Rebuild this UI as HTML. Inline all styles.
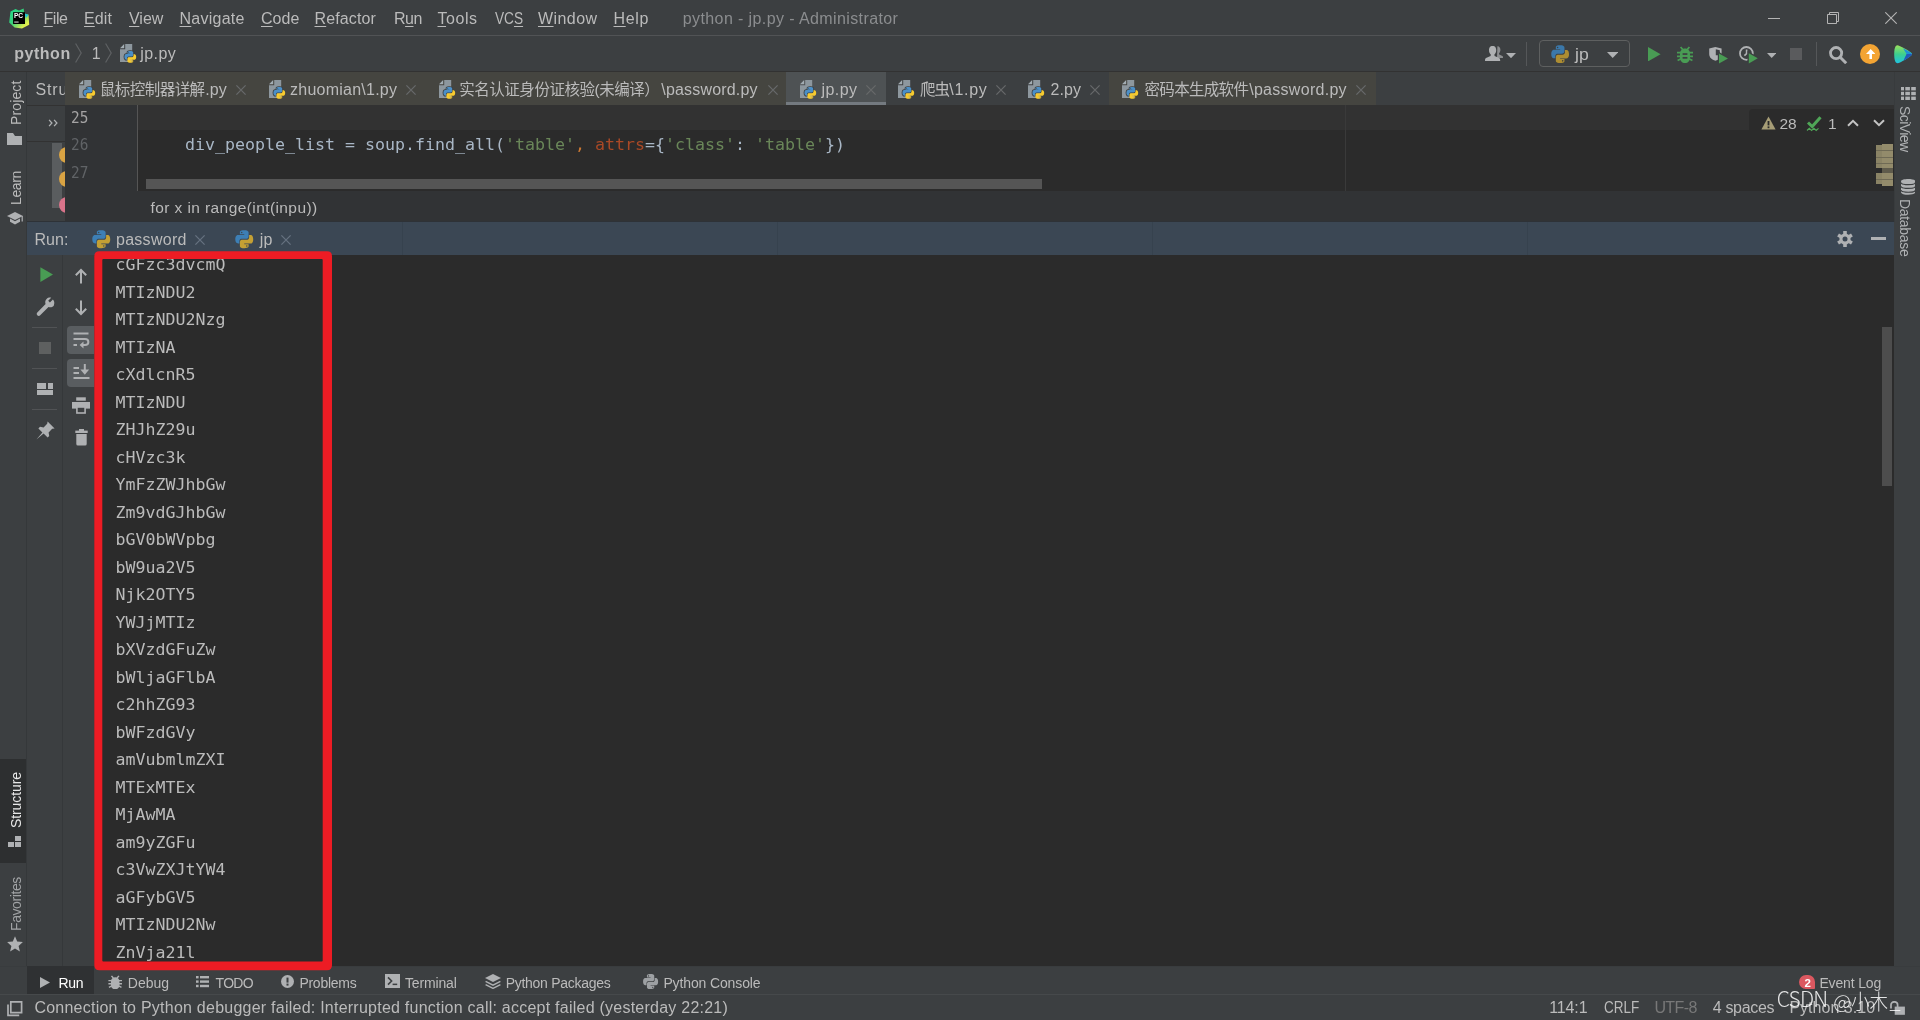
<!DOCTYPE html>
<html lang="zh"><head><meta charset="utf-8"><title>python - jp.py</title><style>
html,body{margin:0;padding:0}
body{width:1920px;height:1020px;background:#3c3f41;overflow:hidden;position:relative;font-family:'Liberation Sans', 'Noto Sans CJK SC', sans-serif;}
#app{position:absolute;left:0;top:0;width:1920px;height:1020px;overflow:hidden;will-change:transform}
.t{position:absolute;white-space:pre;}
.t u{text-decoration:underline;text-decoration-thickness:1px;text-underline-offset:2px}
.code{position:absolute;white-space:pre;font:400 16.61px/27.5px 'DejaVu Sans Mono', 'Liberation Mono', monospace;}
.con{position:absolute;left:115.5px;top:251.1px;white-space:pre;font:400 16.61px/27.5px 'DejaVu Sans Mono', 'Liberation Mono', monospace;color:#bbbbbb}
.wm{position:absolute;white-space:pre;}
</style></head>
<body>
<div id="app">
<div style="position:absolute;left:0px;top:35px;width:1920px;height:1px;background:#515355;"></div>
<div style="position:absolute;left:0px;top:71px;width:1920px;height:1px;background:#323232;"></div>
<div style="position:absolute;left:26px;top:72px;width:1px;height:895px;background:#35383a;"></div>
<div style="position:absolute;left:0px;top:759px;width:26px;height:104px;background:#2d2f30;"></div>
<div style="position:absolute;left:1894px;top:72px;width:1px;height:150px;background:#383b3d;"></div>
<div style="position:absolute;left:27px;top:105px;width:38px;height:1px;background:#323232;"></div>
<div style="position:absolute;left:27px;top:141px;width:38px;height:1px;background:#323232;"></div>
<div style="position:absolute;left:27px;top:142px;width:38px;height:80px;overflow:hidden"><div style="position:absolute;left:25px;top:1px;width:10px;height:65px;background:#5a5d5f;"></div><div style="position:absolute;left:32px;top:5px;width:16px;height:16px;border-radius:8px;background:#d9a343"></div><div style="position:absolute;left:32px;top:29px;width:16px;height:16px;border-radius:8px;background:#d9a343"></div><div style="position:absolute;left:32px;top:55px;width:16px;height:16px;border-radius:8px;background:#d9738a"></div></div>
<svg style="position:absolute;left:48px;top:119px;" width="10" height="8" viewBox="0 0 10 8"><path fill="none" stroke="#afb1b3" stroke-width="1.3" d="M1.1,0.9 L3.9,4 L1.1,7.1 M6.1,0.9 L8.9,4 L6.1,7.1"/></svg>
<div style="position:absolute;left:65px;top:72px;width:721px;height:33px;background:#454540;"></div>
<div style="position:absolute;left:786px;top:72px;width:100px;height:33px;background:#4e5254;"></div>
<div style="position:absolute;left:786px;top:101.5px;width:100px;height:3.5px;background:#747a80;"></div>
<div style="position:absolute;left:1109px;top:72px;width:267px;height:33px;background:#454540;"></div>
<svg style="position:absolute;left:78.6px;top:80px;" width="18" height="20" viewBox="0 0 18 20"><path fill="#8d979e" d="M5.2,0 H12.2 V18 H0 V5.2 H5.2 Z"/><path fill="#a3adb3" d="M0,4.2 L4.2,0 V4.2 Z"/><g transform="translate(3.6,6.2) scale(0.84)"><path fill="#3c3f41" stroke="#3c3f41" stroke-width="2" d="M7.9,1 C4.4,1 4.6,2.5 4.6,2.5 L4.6,4.1 L8,4.1 L8,4.6 L3.3,4.6 C3.3,4.6 1,4.3 1,7.9 C1,11.4 3,11.3 3,11.3 L4.2,11.3 L4.2,9.6 C4.2,9.6 4.1,7.6 6.1,7.6 L9.5,7.6 C9.5,7.6 11.4,7.7 11.4,5.8 L11.4,2.8 C11.4,2.8 11.7,1 7.9,1 Z M6,2.1 C6.4,2.1 6.6,2.4 6.6,2.7 C6.6,3 6.4,3.3 6,3.3 C5.7,3.3 5.4,3 5.4,2.7 C5.4,2.4 5.7,2.1 6,2.1 Z"/><path fill="#4b8fc7" d="M7.9,1 C4.4,1 4.6,2.5 4.6,2.5 L4.6,4.1 L8,4.1 L8,4.6 L3.3,4.6 C3.3,4.6 1,4.3 1,7.9 C1,11.4 3,11.3 3,11.3 L4.2,11.3 L4.2,9.6 C4.2,9.6 4.1,7.6 6.1,7.6 L9.5,7.6 C9.5,7.6 11.4,7.7 11.4,5.8 L11.4,2.8 C11.4,2.8 11.7,1 7.9,1 Z M6,2.1 C6.4,2.1 6.6,2.4 6.6,2.7 C6.6,3 6.4,3.3 6,3.3 C5.7,3.3 5.4,3 5.4,2.7 C5.4,2.4 5.7,2.1 6,2.1 Z"/><path fill="#f7cb2f" d="M8.1,15 C11.6,15 11.4,13.5 11.4,13.5 L11.4,11.9 L8,11.9 L8,11.4 L12.7,11.4 C12.7,11.4 15,11.7 15,8.1 C15,4.6 13,4.7 13,4.7 L11.8,4.7 L11.8,6.4 C11.8,6.4 11.9,8.4 9.9,8.4 L6.5,8.4 C6.5,8.4 4.6,8.3 4.6,10.2 L4.6,13.2 C4.6,13.2 4.3,15 8.1,15 Z M10,13.9 C9.6,13.9 9.4,13.6 9.4,13.3 C9.4,13 9.6,12.7 10,12.7 C10.3,12.7 10.6,13 10.6,13.3 C10.6,13.6 10.3,13.9 10,13.9 Z"/></g></svg>
<svg style="position:absolute;left:268.6px;top:80px;" width="18" height="20" viewBox="0 0 18 20"><path fill="#8d979e" d="M5.2,0 H12.2 V18 H0 V5.2 H5.2 Z"/><path fill="#a3adb3" d="M0,4.2 L4.2,0 V4.2 Z"/><g transform="translate(3.6,6.2) scale(0.84)"><path fill="#3c3f41" stroke="#3c3f41" stroke-width="2" d="M7.9,1 C4.4,1 4.6,2.5 4.6,2.5 L4.6,4.1 L8,4.1 L8,4.6 L3.3,4.6 C3.3,4.6 1,4.3 1,7.9 C1,11.4 3,11.3 3,11.3 L4.2,11.3 L4.2,9.6 C4.2,9.6 4.1,7.6 6.1,7.6 L9.5,7.6 C9.5,7.6 11.4,7.7 11.4,5.8 L11.4,2.8 C11.4,2.8 11.7,1 7.9,1 Z M6,2.1 C6.4,2.1 6.6,2.4 6.6,2.7 C6.6,3 6.4,3.3 6,3.3 C5.7,3.3 5.4,3 5.4,2.7 C5.4,2.4 5.7,2.1 6,2.1 Z"/><path fill="#4b8fc7" d="M7.9,1 C4.4,1 4.6,2.5 4.6,2.5 L4.6,4.1 L8,4.1 L8,4.6 L3.3,4.6 C3.3,4.6 1,4.3 1,7.9 C1,11.4 3,11.3 3,11.3 L4.2,11.3 L4.2,9.6 C4.2,9.6 4.1,7.6 6.1,7.6 L9.5,7.6 C9.5,7.6 11.4,7.7 11.4,5.8 L11.4,2.8 C11.4,2.8 11.7,1 7.9,1 Z M6,2.1 C6.4,2.1 6.6,2.4 6.6,2.7 C6.6,3 6.4,3.3 6,3.3 C5.7,3.3 5.4,3 5.4,2.7 C5.4,2.4 5.7,2.1 6,2.1 Z"/><path fill="#f7cb2f" d="M8.1,15 C11.6,15 11.4,13.5 11.4,13.5 L11.4,11.9 L8,11.9 L8,11.4 L12.7,11.4 C12.7,11.4 15,11.7 15,8.1 C15,4.6 13,4.7 13,4.7 L11.8,4.7 L11.8,6.4 C11.8,6.4 11.9,8.4 9.9,8.4 L6.5,8.4 C6.5,8.4 4.6,8.3 4.6,10.2 L4.6,13.2 C4.6,13.2 4.3,15 8.1,15 Z M10,13.9 C9.6,13.9 9.4,13.6 9.4,13.3 C9.4,13 9.6,12.7 10,12.7 C10.3,12.7 10.6,13 10.6,13.3 C10.6,13.6 10.3,13.9 10,13.9 Z"/></g></svg>
<svg style="position:absolute;left:438.6px;top:80px;" width="18" height="20" viewBox="0 0 18 20"><path fill="#8d979e" d="M5.2,0 H12.2 V18 H0 V5.2 H5.2 Z"/><path fill="#a3adb3" d="M0,4.2 L4.2,0 V4.2 Z"/><g transform="translate(3.6,6.2) scale(0.84)"><path fill="#3c3f41" stroke="#3c3f41" stroke-width="2" d="M7.9,1 C4.4,1 4.6,2.5 4.6,2.5 L4.6,4.1 L8,4.1 L8,4.6 L3.3,4.6 C3.3,4.6 1,4.3 1,7.9 C1,11.4 3,11.3 3,11.3 L4.2,11.3 L4.2,9.6 C4.2,9.6 4.1,7.6 6.1,7.6 L9.5,7.6 C9.5,7.6 11.4,7.7 11.4,5.8 L11.4,2.8 C11.4,2.8 11.7,1 7.9,1 Z M6,2.1 C6.4,2.1 6.6,2.4 6.6,2.7 C6.6,3 6.4,3.3 6,3.3 C5.7,3.3 5.4,3 5.4,2.7 C5.4,2.4 5.7,2.1 6,2.1 Z"/><path fill="#4b8fc7" d="M7.9,1 C4.4,1 4.6,2.5 4.6,2.5 L4.6,4.1 L8,4.1 L8,4.6 L3.3,4.6 C3.3,4.6 1,4.3 1,7.9 C1,11.4 3,11.3 3,11.3 L4.2,11.3 L4.2,9.6 C4.2,9.6 4.1,7.6 6.1,7.6 L9.5,7.6 C9.5,7.6 11.4,7.7 11.4,5.8 L11.4,2.8 C11.4,2.8 11.7,1 7.9,1 Z M6,2.1 C6.4,2.1 6.6,2.4 6.6,2.7 C6.6,3 6.4,3.3 6,3.3 C5.7,3.3 5.4,3 5.4,2.7 C5.4,2.4 5.7,2.1 6,2.1 Z"/><path fill="#f7cb2f" d="M8.1,15 C11.6,15 11.4,13.5 11.4,13.5 L11.4,11.9 L8,11.9 L8,11.4 L12.7,11.4 C12.7,11.4 15,11.7 15,8.1 C15,4.6 13,4.7 13,4.7 L11.8,4.7 L11.8,6.4 C11.8,6.4 11.9,8.4 9.9,8.4 L6.5,8.4 C6.5,8.4 4.6,8.3 4.6,10.2 L4.6,13.2 C4.6,13.2 4.3,15 8.1,15 Z M10,13.9 C9.6,13.9 9.4,13.6 9.4,13.3 C9.4,13 9.6,12.7 10,12.7 C10.3,12.7 10.6,13 10.6,13.3 C10.6,13.6 10.3,13.9 10,13.9 Z"/></g></svg>
<svg style="position:absolute;left:800px;top:80px;" width="18" height="20" viewBox="0 0 18 20"><path fill="#8d979e" d="M5.2,0 H12.2 V18 H0 V5.2 H5.2 Z"/><path fill="#a3adb3" d="M0,4.2 L4.2,0 V4.2 Z"/><g transform="translate(3.6,6.2) scale(0.84)"><path fill="#3c3f41" stroke="#3c3f41" stroke-width="2" d="M7.9,1 C4.4,1 4.6,2.5 4.6,2.5 L4.6,4.1 L8,4.1 L8,4.6 L3.3,4.6 C3.3,4.6 1,4.3 1,7.9 C1,11.4 3,11.3 3,11.3 L4.2,11.3 L4.2,9.6 C4.2,9.6 4.1,7.6 6.1,7.6 L9.5,7.6 C9.5,7.6 11.4,7.7 11.4,5.8 L11.4,2.8 C11.4,2.8 11.7,1 7.9,1 Z M6,2.1 C6.4,2.1 6.6,2.4 6.6,2.7 C6.6,3 6.4,3.3 6,3.3 C5.7,3.3 5.4,3 5.4,2.7 C5.4,2.4 5.7,2.1 6,2.1 Z"/><path fill="#4b8fc7" d="M7.9,1 C4.4,1 4.6,2.5 4.6,2.5 L4.6,4.1 L8,4.1 L8,4.6 L3.3,4.6 C3.3,4.6 1,4.3 1,7.9 C1,11.4 3,11.3 3,11.3 L4.2,11.3 L4.2,9.6 C4.2,9.6 4.1,7.6 6.1,7.6 L9.5,7.6 C9.5,7.6 11.4,7.7 11.4,5.8 L11.4,2.8 C11.4,2.8 11.7,1 7.9,1 Z M6,2.1 C6.4,2.1 6.6,2.4 6.6,2.7 C6.6,3 6.4,3.3 6,3.3 C5.7,3.3 5.4,3 5.4,2.7 C5.4,2.4 5.7,2.1 6,2.1 Z"/><path fill="#f7cb2f" d="M8.1,15 C11.6,15 11.4,13.5 11.4,13.5 L11.4,11.9 L8,11.9 L8,11.4 L12.7,11.4 C12.7,11.4 15,11.7 15,8.1 C15,4.6 13,4.7 13,4.7 L11.8,4.7 L11.8,6.4 C11.8,6.4 11.9,8.4 9.9,8.4 L6.5,8.4 C6.5,8.4 4.6,8.3 4.6,10.2 L4.6,13.2 C4.6,13.2 4.3,15 8.1,15 Z M10,13.9 C9.6,13.9 9.4,13.6 9.4,13.3 C9.4,13 9.6,12.7 10,12.7 C10.3,12.7 10.6,13 10.6,13.3 C10.6,13.6 10.3,13.9 10,13.9 Z"/></g></svg>
<svg style="position:absolute;left:898.3px;top:80px;" width="18" height="20" viewBox="0 0 18 20"><path fill="#8d979e" d="M5.2,0 H12.2 V18 H0 V5.2 H5.2 Z"/><path fill="#a3adb3" d="M0,4.2 L4.2,0 V4.2 Z"/><g transform="translate(3.6,6.2) scale(0.84)"><path fill="#3c3f41" stroke="#3c3f41" stroke-width="2" d="M7.9,1 C4.4,1 4.6,2.5 4.6,2.5 L4.6,4.1 L8,4.1 L8,4.6 L3.3,4.6 C3.3,4.6 1,4.3 1,7.9 C1,11.4 3,11.3 3,11.3 L4.2,11.3 L4.2,9.6 C4.2,9.6 4.1,7.6 6.1,7.6 L9.5,7.6 C9.5,7.6 11.4,7.7 11.4,5.8 L11.4,2.8 C11.4,2.8 11.7,1 7.9,1 Z M6,2.1 C6.4,2.1 6.6,2.4 6.6,2.7 C6.6,3 6.4,3.3 6,3.3 C5.7,3.3 5.4,3 5.4,2.7 C5.4,2.4 5.7,2.1 6,2.1 Z"/><path fill="#4b8fc7" d="M7.9,1 C4.4,1 4.6,2.5 4.6,2.5 L4.6,4.1 L8,4.1 L8,4.6 L3.3,4.6 C3.3,4.6 1,4.3 1,7.9 C1,11.4 3,11.3 3,11.3 L4.2,11.3 L4.2,9.6 C4.2,9.6 4.1,7.6 6.1,7.6 L9.5,7.6 C9.5,7.6 11.4,7.7 11.4,5.8 L11.4,2.8 C11.4,2.8 11.7,1 7.9,1 Z M6,2.1 C6.4,2.1 6.6,2.4 6.6,2.7 C6.6,3 6.4,3.3 6,3.3 C5.7,3.3 5.4,3 5.4,2.7 C5.4,2.4 5.7,2.1 6,2.1 Z"/><path fill="#f7cb2f" d="M8.1,15 C11.6,15 11.4,13.5 11.4,13.5 L11.4,11.9 L8,11.9 L8,11.4 L12.7,11.4 C12.7,11.4 15,11.7 15,8.1 C15,4.6 13,4.7 13,4.7 L11.8,4.7 L11.8,6.4 C11.8,6.4 11.9,8.4 9.9,8.4 L6.5,8.4 C6.5,8.4 4.6,8.3 4.6,10.2 L4.6,13.2 C4.6,13.2 4.3,15 8.1,15 Z M10,13.9 C9.6,13.9 9.4,13.6 9.4,13.3 C9.4,13 9.6,12.7 10,12.7 C10.3,12.7 10.6,13 10.6,13.3 C10.6,13.6 10.3,13.9 10,13.9 Z"/></g></svg>
<svg style="position:absolute;left:1028.3px;top:80px;" width="18" height="20" viewBox="0 0 18 20"><path fill="#8d979e" d="M5.2,0 H12.2 V18 H0 V5.2 H5.2 Z"/><path fill="#a3adb3" d="M0,4.2 L4.2,0 V4.2 Z"/><g transform="translate(3.6,6.2) scale(0.84)"><path fill="#3c3f41" stroke="#3c3f41" stroke-width="2" d="M7.9,1 C4.4,1 4.6,2.5 4.6,2.5 L4.6,4.1 L8,4.1 L8,4.6 L3.3,4.6 C3.3,4.6 1,4.3 1,7.9 C1,11.4 3,11.3 3,11.3 L4.2,11.3 L4.2,9.6 C4.2,9.6 4.1,7.6 6.1,7.6 L9.5,7.6 C9.5,7.6 11.4,7.7 11.4,5.8 L11.4,2.8 C11.4,2.8 11.7,1 7.9,1 Z M6,2.1 C6.4,2.1 6.6,2.4 6.6,2.7 C6.6,3 6.4,3.3 6,3.3 C5.7,3.3 5.4,3 5.4,2.7 C5.4,2.4 5.7,2.1 6,2.1 Z"/><path fill="#4b8fc7" d="M7.9,1 C4.4,1 4.6,2.5 4.6,2.5 L4.6,4.1 L8,4.1 L8,4.6 L3.3,4.6 C3.3,4.6 1,4.3 1,7.9 C1,11.4 3,11.3 3,11.3 L4.2,11.3 L4.2,9.6 C4.2,9.6 4.1,7.6 6.1,7.6 L9.5,7.6 C9.5,7.6 11.4,7.7 11.4,5.8 L11.4,2.8 C11.4,2.8 11.7,1 7.9,1 Z M6,2.1 C6.4,2.1 6.6,2.4 6.6,2.7 C6.6,3 6.4,3.3 6,3.3 C5.7,3.3 5.4,3 5.4,2.7 C5.4,2.4 5.7,2.1 6,2.1 Z"/><path fill="#f7cb2f" d="M8.1,15 C11.6,15 11.4,13.5 11.4,13.5 L11.4,11.9 L8,11.9 L8,11.4 L12.7,11.4 C12.7,11.4 15,11.7 15,8.1 C15,4.6 13,4.7 13,4.7 L11.8,4.7 L11.8,6.4 C11.8,6.4 11.9,8.4 9.9,8.4 L6.5,8.4 C6.5,8.4 4.6,8.3 4.6,10.2 L4.6,13.2 C4.6,13.2 4.3,15 8.1,15 Z M10,13.9 C9.6,13.9 9.4,13.6 9.4,13.3 C9.4,13 9.6,12.7 10,12.7 C10.3,12.7 10.6,13 10.6,13.3 C10.6,13.6 10.3,13.9 10,13.9 Z"/></g></svg>
<svg style="position:absolute;left:1122.3px;top:80px;" width="18" height="20" viewBox="0 0 18 20"><path fill="#8d979e" d="M5.2,0 H12.2 V18 H0 V5.2 H5.2 Z"/><path fill="#a3adb3" d="M0,4.2 L4.2,0 V4.2 Z"/><g transform="translate(3.6,6.2) scale(0.84)"><path fill="#3c3f41" stroke="#3c3f41" stroke-width="2" d="M7.9,1 C4.4,1 4.6,2.5 4.6,2.5 L4.6,4.1 L8,4.1 L8,4.6 L3.3,4.6 C3.3,4.6 1,4.3 1,7.9 C1,11.4 3,11.3 3,11.3 L4.2,11.3 L4.2,9.6 C4.2,9.6 4.1,7.6 6.1,7.6 L9.5,7.6 C9.5,7.6 11.4,7.7 11.4,5.8 L11.4,2.8 C11.4,2.8 11.7,1 7.9,1 Z M6,2.1 C6.4,2.1 6.6,2.4 6.6,2.7 C6.6,3 6.4,3.3 6,3.3 C5.7,3.3 5.4,3 5.4,2.7 C5.4,2.4 5.7,2.1 6,2.1 Z"/><path fill="#4b8fc7" d="M7.9,1 C4.4,1 4.6,2.5 4.6,2.5 L4.6,4.1 L8,4.1 L8,4.6 L3.3,4.6 C3.3,4.6 1,4.3 1,7.9 C1,11.4 3,11.3 3,11.3 L4.2,11.3 L4.2,9.6 C4.2,9.6 4.1,7.6 6.1,7.6 L9.5,7.6 C9.5,7.6 11.4,7.7 11.4,5.8 L11.4,2.8 C11.4,2.8 11.7,1 7.9,1 Z M6,2.1 C6.4,2.1 6.6,2.4 6.6,2.7 C6.6,3 6.4,3.3 6,3.3 C5.7,3.3 5.4,3 5.4,2.7 C5.4,2.4 5.7,2.1 6,2.1 Z"/><path fill="#f7cb2f" d="M8.1,15 C11.6,15 11.4,13.5 11.4,13.5 L11.4,11.9 L8,11.9 L8,11.4 L12.7,11.4 C12.7,11.4 15,11.7 15,8.1 C15,4.6 13,4.7 13,4.7 L11.8,4.7 L11.8,6.4 C11.8,6.4 11.9,8.4 9.9,8.4 L6.5,8.4 C6.5,8.4 4.6,8.3 4.6,10.2 L4.6,13.2 C4.6,13.2 4.3,15 8.1,15 Z M10,13.9 C9.6,13.9 9.4,13.6 9.4,13.3 C9.4,13 9.6,12.7 10,12.7 C10.3,12.7 10.6,13 10.6,13.3 C10.6,13.6 10.3,13.9 10,13.9 Z"/></g></svg>
<svg style="position:absolute;left:234px;top:82.5px;" width="14" height="14" viewBox="-7 -7 14 14"><path d="M-4.6,-4.6 L4.6,4.6 M4.6,-4.6 L-4.6,4.6" stroke="#67696a" stroke-width="1.25" fill="none"/></svg>
<svg style="position:absolute;left:404px;top:82.5px;" width="14" height="14" viewBox="-7 -7 14 14"><path d="M-4.6,-4.6 L4.6,4.6 M4.6,-4.6 L-4.6,4.6" stroke="#67696a" stroke-width="1.25" fill="none"/></svg>
<svg style="position:absolute;left:766px;top:82.5px;" width="14" height="14" viewBox="-7 -7 14 14"><path d="M-4.6,-4.6 L4.6,4.6 M4.6,-4.6 L-4.6,4.6" stroke="#67696a" stroke-width="1.25" fill="none"/></svg>
<svg style="position:absolute;left:864px;top:82.5px;" width="14" height="14" viewBox="-7 -7 14 14"><path d="M-4.6,-4.6 L4.6,4.6 M4.6,-4.6 L-4.6,4.6" stroke="#67696a" stroke-width="1.25" fill="none"/></svg>
<svg style="position:absolute;left:994px;top:82.5px;" width="14" height="14" viewBox="-7 -7 14 14"><path d="M-4.6,-4.6 L4.6,4.6 M4.6,-4.6 L-4.6,4.6" stroke="#67696a" stroke-width="1.25" fill="none"/></svg>
<svg style="position:absolute;left:1088.3px;top:82.5px;" width="14" height="14" viewBox="-7 -7 14 14"><path d="M-4.6,-4.6 L4.6,4.6 M4.6,-4.6 L-4.6,4.6" stroke="#67696a" stroke-width="1.25" fill="none"/></svg>
<svg style="position:absolute;left:1354px;top:82.5px;" width="14" height="14" viewBox="-7 -7 14 14"><path d="M-4.6,-4.6 L4.6,4.6 M4.6,-4.6 L-4.6,4.6" stroke="#67696a" stroke-width="1.25" fill="none"/></svg>
<div style="position:absolute;left:65px;top:105px;width:1829px;height:86px;background:#2b2b2b;"></div>
<div style="position:absolute;left:65px;top:105px;width:72px;height:86px;background:#313335;"></div>
<div style="position:absolute;left:138px;top:105px;width:1756px;height:25px;background:#323232;"></div>
<div style="position:absolute;left:1749px;top:109px;width:145px;height:21px;background:#2b2b2b;border-radius:4px 0 0 0"></div>
<div style="position:absolute;left:137px;top:105px;width:1px;height:86px;background:#555555;"></div>
<div style="position:absolute;left:1345px;top:105px;width:1px;height:86px;background:#3a3a3a;"></div>
<div style="position:absolute;left:146px;top:179px;width:896px;height:10px;background:#555555;"></div>
<div style="font:400 16px/1 'DejaVu Sans Mono', 'Liberation Mono', monospace;position:absolute;left:71.3px;white-space:pre;transform-origin:0 0;transform:scaleX(0.9);top:110.0px;color:#a4a3a3">25</div>
<div style="font:400 16px/1 'DejaVu Sans Mono', 'Liberation Mono', monospace;position:absolute;left:71.3px;white-space:pre;transform-origin:0 0;transform:scaleX(0.9);top:137.4px;color:#606366">26</div>
<div style="font:400 16px/1 'DejaVu Sans Mono', 'Liberation Mono', monospace;position:absolute;left:71.3px;white-space:pre;transform-origin:0 0;transform:scaleX(0.9);top:165.1px;color:#606366">27</div>
<div class="code" style="left:185px;top:130.8px;color:#a9b7c6">div_people_list = soup.find_all(<span style="color:#6a8759">'table'</span><span style="color:#cc7832">,</span> <span style="color:#aa4926">attrs</span>={<span style="color:#6a8759">'class'</span>: <span style="color:#6a8759">'table'</span>})</div>
<svg style="position:absolute;left:1761px;top:116px;" width="15" height="14" viewBox="0 0 15 14"><path fill="#a69d76" d="M7.5,0.5 L14.6,13.5 H0.4 Z"/><rect x="6.6" y="5" width="1.8" height="4.4" fill="#2b2b2b"/><rect x="6.6" y="10.4" width="1.8" height="1.8" fill="#2b2b2b"/></svg>
<svg style="position:absolute;left:1806px;top:115px;" width="17" height="18" viewBox="0 0 17 18"><path fill="none" stroke="#4fa657" stroke-width="3" d="M2,7.5 L6.2,11.5 L14.5,2.2"/><path fill="none" stroke="#4fa657" stroke-width="1.1" d="M1,15.5 L3.3,13.3 L5.6,15.5 L7.9,13.3 L10.2,15.5 L12.5,13.3"/></svg>
<svg style="position:absolute;left:1847px;top:119px;" width="12" height="8" viewBox="0 0 12 8"><path fill="none" stroke="#c4c4c4" stroke-width="2" d="M1,6.8 L6,1.8 L11,6.8"/></svg>
<svg style="position:absolute;left:1873px;top:119px;" width="12" height="8" viewBox="0 0 12 8"><path fill="none" stroke="#c4c4c4" stroke-width="2" d="M1,1.2 L6,6.2 L11,1.2"/></svg>
<div style="position:absolute;left:1876px;top:145px;width:6px;height:23px;background:#8a8365;"></div>
<div style="position:absolute;left:1882px;top:144px;width:11px;height:24px;background:#938b6b;"></div>
<div style="position:absolute;left:1882px;top:168px;width:11px;height:5px;background:#5f5b4c;"></div>
<div style="position:absolute;left:1876px;top:173px;width:6px;height:11px;background:#8a8365;"></div>
<div style="position:absolute;left:1882px;top:173px;width:11px;height:13px;background:#938b6b;"></div>
<div style="position:absolute;left:1876px;top:150px;width:17px;height:1px;background:#6f6a55;"></div>
<div style="position:absolute;left:1876px;top:157px;width:17px;height:1px;background:#6f6a55;"></div>
<div style="position:absolute;left:1876px;top:163px;width:17px;height:1px;background:#6f6a55;"></div>
<div style="position:absolute;left:1876px;top:179px;width:17px;height:1px;background:#6f6a55;"></div>
<div style="position:absolute;left:65px;top:191px;width:1829px;height:31px;background:#313335;"></div>
<div style="position:absolute;left:27px;top:221px;width:1867px;height:1px;background:#2e3237;"></div>
<div style="position:absolute;left:27px;top:222px;width:1867px;height:33px;background:#3b4754;"></div>
<div style="position:absolute;left:402px;top:222px;width:1px;height:33px;background:#36424e;"></div>
<div style="position:absolute;left:777px;top:222px;width:1px;height:33px;background:#36424e;"></div>
<div style="position:absolute;left:1152px;top:222px;width:1px;height:33px;background:#36424e;"></div>
<div style="position:absolute;left:1527px;top:222px;width:1px;height:33px;background:#36424e;"></div>
<svg style="position:absolute;left:90.7px;top:228.6px;" width="20.5" height="20.5" viewBox="0 0 16 16"><path fill="#3d7fb5" d="M7.9,1 C4.4,1 4.6,2.5 4.6,2.5 L4.6,4.1 L8,4.1 L8,4.6 L3.3,4.6 C3.3,4.6 1,4.3 1,7.9 C1,11.4 3,11.3 3,11.3 L4.2,11.3 L4.2,9.6 C4.2,9.6 4.1,7.6 6.1,7.6 L9.5,7.6 C9.5,7.6 11.4,7.7 11.4,5.8 L11.4,2.8 C11.4,2.8 11.7,1 7.9,1 Z M6,2.1 C6.4,2.1 6.6,2.4 6.6,2.7 C6.6,3 6.4,3.3 6,3.3 C5.7,3.3 5.4,3 5.4,2.7 C5.4,2.4 5.7,2.1 6,2.1 Z"/><path fill="#c4a034" d="M8.1,15 C11.6,15 11.4,13.5 11.4,13.5 L11.4,11.9 L8,11.9 L8,11.4 L12.7,11.4 C12.7,11.4 15,11.7 15,8.1 C15,4.6 13,4.7 13,4.7 L11.8,4.7 L11.8,6.4 C11.8,6.4 11.9,8.4 9.9,8.4 L6.5,8.4 C6.5,8.4 4.6,8.3 4.6,10.2 L4.6,13.2 C4.6,13.2 4.3,15 8.1,15 Z M10,13.9 C9.6,13.9 9.4,13.6 9.4,13.3 C9.4,13 9.6,12.7 10,12.7 C10.3,12.7 10.6,13 10.6,13.3 C10.6,13.6 10.3,13.9 10,13.9 Z"/></svg>
<svg style="position:absolute;left:234.2px;top:228.6px;" width="20.5" height="20.5" viewBox="0 0 16 16"><path fill="#3d7fb5" d="M7.9,1 C4.4,1 4.6,2.5 4.6,2.5 L4.6,4.1 L8,4.1 L8,4.6 L3.3,4.6 C3.3,4.6 1,4.3 1,7.9 C1,11.4 3,11.3 3,11.3 L4.2,11.3 L4.2,9.6 C4.2,9.6 4.1,7.6 6.1,7.6 L9.5,7.6 C9.5,7.6 11.4,7.7 11.4,5.8 L11.4,2.8 C11.4,2.8 11.7,1 7.9,1 Z M6,2.1 C6.4,2.1 6.6,2.4 6.6,2.7 C6.6,3 6.4,3.3 6,3.3 C5.7,3.3 5.4,3 5.4,2.7 C5.4,2.4 5.7,2.1 6,2.1 Z"/><path fill="#c4a034" d="M8.1,15 C11.6,15 11.4,13.5 11.4,13.5 L11.4,11.9 L8,11.9 L8,11.4 L12.7,11.4 C12.7,11.4 15,11.7 15,8.1 C15,4.6 13,4.7 13,4.7 L11.8,4.7 L11.8,6.4 C11.8,6.4 11.9,8.4 9.9,8.4 L6.5,8.4 C6.5,8.4 4.6,8.3 4.6,10.2 L4.6,13.2 C4.6,13.2 4.3,15 8.1,15 Z M10,13.9 C9.6,13.9 9.4,13.6 9.4,13.3 C9.4,13 9.6,12.7 10,12.7 C10.3,12.7 10.6,13 10.6,13.3 C10.6,13.6 10.3,13.9 10,13.9 Z"/></svg>
<svg style="position:absolute;left:193px;top:232.5px;" width="14" height="14" viewBox="-7 -7 14 14"><path d="M-4.6,-4.6 L4.6,4.6 M4.6,-4.6 L-4.6,4.6" stroke="#667280" stroke-width="1.25" fill="none"/></svg>
<svg style="position:absolute;left:279px;top:232.5px;" width="14" height="14" viewBox="-7 -7 14 14"><path d="M-4.6,-4.6 L4.6,4.6 M4.6,-4.6 L-4.6,4.6" stroke="#667280" stroke-width="1.25" fill="none"/></svg>
<svg style="position:absolute;left:1837px;top:231px;" width="16" height="16" viewBox="0 0 16 16"><g transform="translate(8,8)" fill="#afb1b3"><circle r="5.6"/><rect x="-1.8" y="-8" width="3.6" height="4" transform="rotate(0)"/><rect x="-1.8" y="-8" width="3.6" height="4" transform="rotate(60)"/><rect x="-1.8" y="-8" width="3.6" height="4" transform="rotate(120)"/><rect x="-1.8" y="-8" width="3.6" height="4" transform="rotate(180)"/><rect x="-1.8" y="-8" width="3.6" height="4" transform="rotate(240)"/><rect x="-1.8" y="-8" width="3.6" height="4" transform="rotate(300)"/><circle r="2.5" fill="#3b4754"/></g></svg>
<div style="position:absolute;left:1870.5px;top:237px;width:15.5px;height:3.4px;background:#afb1b3;"></div>
<div style="position:absolute;left:95px;top:255px;width:1799px;height:711px;background:#2b2b2b;"></div>
<div style="position:absolute;left:62px;top:255px;width:1px;height:711px;background:#35383a;"></div>
<div style="position:absolute;left:94px;top:255px;width:1px;height:711px;background:#35383a;"></div>
<div style="position:absolute;left:1882px;top:327px;width:10.3px;height:159px;background:#4d4d4d;"></div>
<div class="con">cGFzc3dvcmQ
MTIzNDU2
MTIzNDU2Nzg
MTIzNA
cXdlcnR5
MTIzNDU
ZHJhZ29u
cHVzc3k
YmFzZWJhbGw
Zm9vdGJhbGw
bGV0bWVpbg
bW9ua2V5
Njk2OTY5
YWJjMTIz
bXVzdGFuZw
bWljaGFlbA
c2hhZG93
bWFzdGVy
amVubmlmZXI
MTExMTEx
MjAwMA
am9yZGFu
c3VwZXJtYW4
aGFybGV5
MTIzNDU2Nw
ZnVja21l</div>
<svg style="position:absolute;left:39.5px;top:266.5px;" width="14" height="16" viewBox="0 0 14 16"><path fill="#499c54" d="M0.4,0.3 L13,7.6 L0.4,15 Z"/></svg>
<svg style="position:absolute;left:36px;top:296.5px;" width="19" height="19" viewBox="0 0 19 19"><path fill="#afb1b3" d="M17.6,5.2 C17.9,3.5 17.4,1.9 16.3,0.9 L13.3,3.9 L11.6,2.2 L14.6,-0.8 C13,-1.3 11.2,-0.8 10,0.4 C8.6,1.8 8.3,3.8 9,5.5 L0.7,13.8 C-0.1,14.6 -0.1,15.9 0.7,16.7 C1.5,17.5 2.8,17.5 3.6,16.7 L11.9,8.4 C13.6,9.1 15.6,8.8 17,7.4 C17.3,6.7 17.5,6 17.6,5.2 Z" transform="translate(0.6,1.6)"/></svg>
<div style="position:absolute;left:32px;top:326.5px;width:25px;height:1px;background:#515355;"></div>
<div style="position:absolute;left:39px;top:342px;width:12px;height:12px;background:#5e6060;"></div>
<div style="position:absolute;left:32px;top:368px;width:25px;height:1px;background:#515355;"></div>
<div style="position:absolute;left:37.2px;top:383px;width:9px;height:5.5px;background:#afb1b3;"></div>
<div style="position:absolute;left:47.6px;top:383px;width:5.3px;height:5.5px;background:#afb1b3;"></div>
<div style="position:absolute;left:37.2px;top:390px;width:15.7px;height:5.3px;background:#afb1b3;"></div>
<div style="position:absolute;left:32px;top:409px;width:25px;height:1px;background:#515355;"></div>
<svg style="position:absolute;left:35.5px;top:420.5px;" width="19" height="19" viewBox="0 0 19 19"><path fill="#afb1b3" d="M11.6,0.4 L18.6,7.4 L16.2,7.8 L12.6,11.4 L13.2,15 L11.6,16.6 L7.6,12.6 L0.4,18.6 L6.4,11.4 L2.4,7.4 L4,5.8 L7.6,6.4 L11.2,2.8 Z"/></svg>
<svg style="position:absolute;left:75px;top:267.5px;" width="12" height="16" viewBox="0 0 12 16"><path fill="none" stroke="#afb1b3" stroke-width="2" d="M6,15.5 V2 M0.8,7.2 L6,2 L11.2,7.2"/></svg>
<svg style="position:absolute;left:75px;top:300px;" width="12" height="16" viewBox="0 0 12 16"><path fill="none" stroke="#afb1b3" stroke-width="2" d="M6,0.5 V14 M0.8,8.8 L6,14 L11.2,8.8"/></svg>
<div style="position:absolute;left:67px;top:326px;width:27px;height:28px;background:#595d60;border-radius:4px 0 0 4px"></div>
<svg style="position:absolute;left:73px;top:332px;" width="17" height="17" viewBox="0 0 17 17"><g fill="none" stroke="#afb1b3" stroke-width="2"><path d="M0.5,1.5 H15.5"/><path d="M0.5,7 H12 C16.5,7 16.5,13 12,13 H8"/><path d="M0.5,13 H4"/></g><path fill="#afb1b3" d="M10.5,9.6 V16.4 L6.6,13 Z"/></svg>
<div style="position:absolute;left:67px;top:359px;width:27px;height:27.5px;background:#595d60;border-radius:4px 0 0 4px"></div>
<svg style="position:absolute;left:73px;top:364px;" width="17" height="16" viewBox="0 0 17 16"><g fill="none" stroke="#afb1b3" stroke-width="2"><path d="M0.5,4 H6"/><path d="M0.5,9 H6"/><path d="M0.5,14 H16.5"/><path d="M11.8,0 V9"/></g><path fill="#afb1b3" d="M7.4,5.6 H16.2 L11.8,10.8 Z"/></svg>
<svg style="position:absolute;left:72px;top:397px;" width="18" height="17" viewBox="0 0 18 17"><rect x="4.2" y="0.3" width="9.6" height="3.4" fill="#afb1b3"/><rect x="0" y="5" width="18" height="6.6" fill="#afb1b3"/><rect x="4.9" y="10" width="8.2" height="6" fill="#3c3f41" stroke="#afb1b3" stroke-width="1.6"/></svg>
<svg style="position:absolute;left:74.5px;top:429px;" width="13" height="17" viewBox="0 0 13 17"><rect x="0.3" y="1.6" width="12.4" height="2.4" fill="#afb1b3"/><rect x="4" y="0" width="5" height="2" fill="#afb1b3"/><path fill="#afb1b3" d="M1.3,5 H11.7 V15 Q11.7,16.6 10.2,16.6 H2.8 Q1.3,16.6 1.3,15 Z"/></svg>
<svg style="position:absolute;left:7px;top:132.5px;" width="15" height="12" viewBox="0 0 15 12"><path fill="#afb1b3" d="M0,0 H6 L8,3 H15 V12 H0 Z"/></svg>
<svg style="position:absolute;left:6.5px;top:211.5px;" width="16" height="13" viewBox="0 0 16 13"><path fill="#afb1b3" d="M8,0 L16,4 L8,8 L0,4 Z"/><path fill="#afb1b3" d="M3,6.6 L8,9.2 L13,6.6 V9.8 L8,12.6 L3,9.8 Z"/><rect x="14.6" y="4" width="1.2" height="5.5" fill="#afb1b3"/></svg>
<div style="position:absolute;left:14.6px;top:836px;width:6px;height:5px;background:#afb1b3;"></div>
<div style="position:absolute;left:8px;top:842.3px;width:6px;height:5px;background:#afb1b3;"></div>
<div style="position:absolute;left:14.6px;top:842.3px;width:6px;height:5px;background:#afb1b3;"></div>
<svg style="position:absolute;left:6.5px;top:936px;" width="16" height="16" viewBox="0 0 16 16"><path fill="#afb1b3" d="M8,0.3 L10.2,5.6 L15.9,6.1 L11.6,9.9 L12.9,15.5 L8,12.5 L3.1,15.5 L4.4,9.9 L0.1,6.1 L5.8,5.6 Z"/></svg>
<svg style="position:absolute;left:1900.5px;top:87px;" width="15" height="13" viewBox="0 0 15 13"><rect x="0" y="0" width="3" height="3.4" fill="#afb1b3"/><rect x="4.3" y="0" width="4.6" height="3.4" fill="#afb1b3"/><rect x="10.2" y="0" width="4.6" height="3.4" fill="#afb1b3"/><rect x="0" y="4.8" width="3" height="3.4" fill="#afb1b3"/><rect x="4.3" y="4.8" width="4.6" height="3.4" fill="#afb1b3"/><rect x="10.2" y="4.8" width="4.6" height="3.4" fill="#afb1b3"/><rect x="0" y="9.6" width="3" height="3.4" fill="#afb1b3"/><rect x="4.3" y="9.6" width="4.6" height="3.4" fill="#afb1b3"/><rect x="10.2" y="9.6" width="4.6" height="3.4" fill="#afb1b3"/></svg>
<svg style="position:absolute;left:1900.9px;top:178.8px;" width="14.4" height="15.8" viewBox="0 0 14.4 15.8"><path fill="#afb1b3" d="M0,2.4 C0,-0.8 14.4,-0.8 14.4,2.4 V13.2 C14.4,16.6 0,16.6 0,13.2 Z"/><path fill="none" stroke="#3c3f41" stroke-width="1.2" d="M0,3.4 C0,6.4 14.4,6.4 14.4,3.4 M0,7.2 C0,10.2 14.4,10.2 14.4,7.2 M0,11 C0,14 14.4,14 14.4,11"/></svg>
<div style="position:absolute;left:0px;top:966px;width:1920px;height:1px;background:#393c3e;"></div>
<div style="position:absolute;left:27px;top:966.4px;width:66.5px;height:27.6px;background:#2f3133;"></div>
<div style="position:absolute;left:0px;top:994px;width:1920px;height:1px;background:#46494b;"></div>
<svg style="position:absolute;left:39.6px;top:977px;" width="10" height="11" viewBox="0 0 10 11"><path fill="#afb1b3" d="M0,0 L10,5.5 L0,11 Z"/></svg>
<svg style="position:absolute;left:107.5px;top:974.6px;" width="14.4" height="14.6" viewBox="0 0 16 17.2"><g fill="none" stroke="#afb1b3" stroke-width="1.7"><path d="M3.6,1 L5.8,3.6 M12.4,1 L10.2,3.6"/><path d="M0,6.6 H4 M0,10.4 H4 M0.6,14.6 L4,12.8 M16,6.6 H12 M16,10.4 H12 M15.4,14.6 L12,12.8"/></g><path fill="#afb1b3" d="M8,2.6 C11,2.6 13,4.8 13,7.4 V11.4 C13,14.6 11,17 8,17 C5,17 3,14.6 3,11.4 V7.4 C3,4.8 5,2.6 8,2.6 Z"/><rect x="5.6" y="7.2" width="4.8" height="1.7" fill="#afb1b3"/><rect x="5.6" y="11" width="4.8" height="1.7" fill="#afb1b3"/></svg>
<svg style="position:absolute;left:195.8px;top:976px;" width="13" height="12" viewBox="0 0 13 12"><rect x="0" y="0" width="2.6" height="2.4" fill="#afb1b3"/><rect x="4" y="0" width="9" height="2.4" fill="#afb1b3"/><rect x="0" y="4.4" width="2.6" height="2.4" fill="#afb1b3"/><rect x="4" y="4.4" width="9" height="2.4" fill="#afb1b3"/><rect x="0" y="8.8" width="2.6" height="2.4" fill="#afb1b3"/><rect x="4" y="8.8" width="9" height="2.4" fill="#afb1b3"/></svg>
<svg style="position:absolute;left:280.8px;top:974.5px;" width="13" height="13" viewBox="0 0 13 13"><circle cx="6.5" cy="6.5" r="6.5" fill="#afb1b3"/><rect x="5.5" y="2.6" width="2" height="5" fill="#3c3f41"/><rect x="5.5" y="8.6" width="2" height="2" fill="#3c3f41"/></svg>
<svg style="position:absolute;left:384.6px;top:974px;" width="15" height="14" viewBox="0 0 15 14"><rect width="15" height="14" fill="#afb1b3"/><path d="M3,3.4 L6.6,7 L3,10.6" fill="none" stroke="#3c3f41" stroke-width="1.6"/><rect x="7.6" y="9.6" width="4.6" height="1.5" fill="#3c3f41"/></svg>
<svg style="position:absolute;left:485.2px;top:974px;" width="16" height="15" viewBox="0 0 16 15"><path fill="#afb1b3" d="M8,0 L16,4 L8,8 L0,4 Z"/><path fill="none" stroke="#afb1b3" stroke-width="1.5" d="M0.6,7.4 L8,11.1 L15.4,7.4 M0.6,10.6 L8,14.3 L15.4,10.6"/></svg>
<svg style="position:absolute;left:641.9px;top:973.1px;" width="17.2" height="17.2" viewBox="0 0 16 16"><path fill="#9da0a3" d="M7.9,1 C4.4,1 4.6,2.5 4.6,2.5 L4.6,4.1 L8,4.1 L8,4.6 L3.3,4.6 C3.3,4.6 1,4.3 1,7.9 C1,11.4 3,11.3 3,11.3 L4.2,11.3 L4.2,9.6 C4.2,9.6 4.1,7.6 6.1,7.6 L9.5,7.6 C9.5,7.6 11.4,7.7 11.4,5.8 L11.4,2.8 C11.4,2.8 11.7,1 7.9,1 Z M6,2.1 C6.4,2.1 6.6,2.4 6.6,2.7 C6.6,3 6.4,3.3 6,3.3 C5.7,3.3 5.4,3 5.4,2.7 C5.4,2.4 5.7,2.1 6,2.1 Z"/><path fill="#9da0a3" d="M8.1,15 C11.6,15 11.4,13.5 11.4,13.5 L11.4,11.9 L8,11.9 L8,11.4 L12.7,11.4 C12.7,11.4 15,11.7 15,8.1 C15,4.6 13,4.7 13,4.7 L11.8,4.7 L11.8,6.4 C11.8,6.4 11.9,8.4 9.9,8.4 L6.5,8.4 C6.5,8.4 4.6,8.3 4.6,10.2 L4.6,13.2 C4.6,13.2 4.3,15 8.1,15 Z M10,13.9 C9.6,13.9 9.4,13.6 9.4,13.3 C9.4,13 9.6,12.7 10,12.7 C10.3,12.7 10.6,13 10.6,13.3 C10.6,13.6 10.3,13.9 10,13.9 Z"/></svg>
<div style="position:absolute;left:1799.2px;top:974.8px;width:15.6px;height:14.6px;background:#db5860;border-radius:7.5px 7.5px 1px 7.5px"></div>
<svg style="position:absolute;left:7.3px;top:1000.8px;" width="16" height="16" viewBox="0 0 16 16"><path fill="none" stroke="#afb1b3" stroke-width="1.7" d="M3.8,0.9 H14.6 V11.7 H3.8 Z M1,3.6 V14.4 H12.2"/></svg>
<svg style="position:absolute;left:1889.5px;top:1000.5px;" width="15" height="14" viewBox="0 0 15 14"><rect x="4.7" y="5.6" width="10.2" height="8.2" fill="#afb1b3"/><path fill="none" stroke="#afb1b3" stroke-width="1.7" d="M1,7.4 V3.8 C1,-0.2 7.6,-0.2 7.6,3.8 V6"/></svg>
<svg style="position:absolute;left:8.9px;top:7.8px;" width="21" height="21" viewBox="0 0 21 21"><defs><linearGradient id="lg1" x1="0" y1="0" x2="1" y2="1"><stop offset="0" stop-color="#21d789"/><stop offset="0.45" stop-color="#3ad07a"/><stop offset="0.8" stop-color="#d8ee4e"/><stop offset="1" stop-color="#f5f04a"/></linearGradient></defs><path fill="url(#lg1)" d="M1.5,3.5 L6.5,1 L10,2.6 L14.6,0.4 L15.4,5.4 L19.6,6.8 L20.2,16.8 L13,20.4 L5.6,19.4 L0.2,14.6 Z"/><path fill="#21c2d6" d="M15.4,5.4 L19.6,6.8 L17,10 Z"/><rect x="4.1" y="4.2" width="11.9" height="11.8" fill="#000"/><rect x="5.2" y="13.6" width="4.4" height="0.9" fill="#fff"/></svg>
<div style="position:absolute;left:14px;top:12.6px;font:700 6.6px/1 'Liberation Sans', 'Noto Sans CJK SC', sans-serif;color:#fff;letter-spacing:-0.2px">PC</div>
<div style="position:absolute;left:1768px;top:18px;width:12px;height:1px;background:#b4b4b4;"></div>
<svg style="position:absolute;left:1827px;top:12px;" width="12" height="12" viewBox="0 0 12 12"><path fill="none" stroke="#b4b4b4" stroke-width="1" d="M0.5,2.5 H9.5 V11.5 H0.5 Z M2.5,2.5 V0.5 H11.5 V9.5 H9.5"/></svg>
<svg style="position:absolute;left:1885px;top:12px;" width="12" height="12" viewBox="0 0 12 12"><path fill="none" stroke="#b4b4b4" stroke-width="1.1" d="M0.3,0.3 L11.7,11.7 M11.7,0.3 L0.3,11.7"/></svg>
<svg style="position:absolute;left:74.7px;top:43.3px;" width="7" height="20" viewBox="0 0 7 20"><path fill="none" stroke="#5e6163" stroke-width="1.2" d="M0.6,0.5 L6.2,10 L0.6,19.5"/></svg>
<svg style="position:absolute;left:105.4px;top:43.3px;" width="7" height="20" viewBox="0 0 7 20"><path fill="none" stroke="#5e6163" stroke-width="1.2" d="M0.6,0.5 L6.2,10 L0.6,19.5"/></svg>
<svg style="position:absolute;left:119.8px;top:43.8px;" width="18" height="20" viewBox="0 0 18 20"><path fill="#8d979e" d="M5.2,0 H12.2 V18 H0 V5.2 H5.2 Z"/><path fill="#a3adb3" d="M0,4.2 L4.2,0 V4.2 Z"/><g transform="translate(3.6,6.2) scale(0.84)"><path fill="#3c3f41" stroke="#3c3f41" stroke-width="2" d="M7.9,1 C4.4,1 4.6,2.5 4.6,2.5 L4.6,4.1 L8,4.1 L8,4.6 L3.3,4.6 C3.3,4.6 1,4.3 1,7.9 C1,11.4 3,11.3 3,11.3 L4.2,11.3 L4.2,9.6 C4.2,9.6 4.1,7.6 6.1,7.6 L9.5,7.6 C9.5,7.6 11.4,7.7 11.4,5.8 L11.4,2.8 C11.4,2.8 11.7,1 7.9,1 Z M6,2.1 C6.4,2.1 6.6,2.4 6.6,2.7 C6.6,3 6.4,3.3 6,3.3 C5.7,3.3 5.4,3 5.4,2.7 C5.4,2.4 5.7,2.1 6,2.1 Z"/><path fill="#4b8fc7" d="M7.9,1 C4.4,1 4.6,2.5 4.6,2.5 L4.6,4.1 L8,4.1 L8,4.6 L3.3,4.6 C3.3,4.6 1,4.3 1,7.9 C1,11.4 3,11.3 3,11.3 L4.2,11.3 L4.2,9.6 C4.2,9.6 4.1,7.6 6.1,7.6 L9.5,7.6 C9.5,7.6 11.4,7.7 11.4,5.8 L11.4,2.8 C11.4,2.8 11.7,1 7.9,1 Z M6,2.1 C6.4,2.1 6.6,2.4 6.6,2.7 C6.6,3 6.4,3.3 6,3.3 C5.7,3.3 5.4,3 5.4,2.7 C5.4,2.4 5.7,2.1 6,2.1 Z"/><path fill="#f7cb2f" d="M8.1,15 C11.6,15 11.4,13.5 11.4,13.5 L11.4,11.9 L8,11.9 L8,11.4 L12.7,11.4 C12.7,11.4 15,11.7 15,8.1 C15,4.6 13,4.7 13,4.7 L11.8,4.7 L11.8,6.4 C11.8,6.4 11.9,8.4 9.9,8.4 L6.5,8.4 C6.5,8.4 4.6,8.3 4.6,10.2 L4.6,13.2 C4.6,13.2 4.3,15 8.1,15 Z M10,13.9 C9.6,13.9 9.4,13.6 9.4,13.3 C9.4,13 9.6,12.7 10,12.7 C10.3,12.7 10.6,13 10.6,13.3 C10.6,13.6 10.3,13.9 10,13.9 Z"/></g></svg>
<svg style="position:absolute;left:1485px;top:46px;" width="18" height="15" viewBox="0 0 18 15"><path fill="#8c8e90" d="M12.4,0.2 C14.6,0.2 15.4,2 15.4,3.8 C15.4,5.4 14.8,6.6 14,7.4 L14.2,8.6 L17.4,10 C18,10.4 18,11 18,12 H12 Z"/><path fill="#afb1b3" d="M7.6,0 C10.4,0 11.2,2.2 11.2,4.2 C11.2,6.2 10.4,7.6 9.4,8.4 L9.6,10 L14.2,12 C15,12.4 15.2,13.4 15.2,15 H0 C0,13.4 0.2,12.4 1,12 L5.6,10 L5.8,8.4 C4.8,7.6 4,6.2 4,4.2 C4,2.2 4.8,0 7.6,0 Z"/></svg>
<svg style="position:absolute;left:1506px;top:53.2px;" width="10" height="5.2" viewBox="0 0 10 5.2"><path fill="#afb1b3" d="M0,0 H10 L5,5.2 Z"/></svg>
<div style="position:absolute;left:1526px;top:42.3px;width:1px;height:24px;background:#555759;"></div>
<div style="position:absolute;left:1538.8px;top:40.4px;width:89px;height:24.8px;border:1px solid #5e6060;border-radius:4px"></div>
<svg style="position:absolute;left:1549.7px;top:43.9px;" width="20.3" height="20.3" viewBox="0 0 16 16"><path fill="#3b78aa" d="M7.9,1 C4.4,1 4.6,2.5 4.6,2.5 L4.6,4.1 L8,4.1 L8,4.6 L3.3,4.6 C3.3,4.6 1,4.3 1,7.9 C1,11.4 3,11.3 3,11.3 L4.2,11.3 L4.2,9.6 C4.2,9.6 4.1,7.6 6.1,7.6 L9.5,7.6 C9.5,7.6 11.4,7.7 11.4,5.8 L11.4,2.8 C11.4,2.8 11.7,1 7.9,1 Z M6,2.1 C6.4,2.1 6.6,2.4 6.6,2.7 C6.6,3 6.4,3.3 6,3.3 C5.7,3.3 5.4,3 5.4,2.7 C5.4,2.4 5.7,2.1 6,2.1 Z"/><path fill="#ad8d32" d="M8.1,15 C11.6,15 11.4,13.5 11.4,13.5 L11.4,11.9 L8,11.9 L8,11.4 L12.7,11.4 C12.7,11.4 15,11.7 15,8.1 C15,4.6 13,4.7 13,4.7 L11.8,4.7 L11.8,6.4 C11.8,6.4 11.9,8.4 9.9,8.4 L6.5,8.4 C6.5,8.4 4.6,8.3 4.6,10.2 L4.6,13.2 C4.6,13.2 4.3,15 8.1,15 Z M10,13.9 C9.6,13.9 9.4,13.6 9.4,13.3 C9.4,13 9.6,12.7 10,12.7 C10.3,12.7 10.6,13 10.6,13.3 C10.6,13.6 10.3,13.9 10,13.9 Z"/></svg>
<svg style="position:absolute;left:1606.6px;top:51.5px;" width="11.4" height="6" viewBox="0 0 11.4 6"><path fill="#afb1b3" d="M0,0 H11.4 L5.7,6 Z"/></svg>
<svg style="position:absolute;left:1647.9px;top:46.9px;" width="13" height="14.4" viewBox="0 0 13 14.4"><path fill="#499c54" d="M0,0 L12.6,7.2 L0,14.4 Z"/></svg>
<svg style="position:absolute;left:1677px;top:45.7px;" width="16" height="17.2" viewBox="0 0 16 17.2"><g fill="none" stroke="#499c54" stroke-width="1.7"><path d="M3.6,1 L5.8,3.6 M12.4,1 L10.2,3.6"/><path d="M0,6.6 H4 M0,10.4 H4 M0.6,14.6 L4,12.8 M16,6.6 H12 M16,10.4 H12 M15.4,14.6 L12,12.8"/></g><path fill="#499c54" d="M8,2.6 C11,2.6 13,4.8 13,7.4 V11.4 C13,14.6 11,17 8,17 C5,17 3,14.6 3,11.4 V7.4 C3,4.8 5,2.6 8,2.6 Z"/><rect x="5.6" y="7.2" width="4.8" height="1.7" fill="#3c3f41"/><rect x="5.6" y="11" width="4.8" height="1.7" fill="#3c3f41"/></svg>
<svg style="position:absolute;left:1709px;top:46.9px;" width="19.2" height="16.8" viewBox="0 0 19.2 16.8"><path fill="#afb1b3" d="M0.2,1.6 L6.4,0 L12.6,1.6 V7 C12.6,10.4 10,12.8 6.4,13.8 C2.8,12.8 0.2,10.4 0.2,7 Z"/><path fill="#3c3f41" d="M6.8,2.3 L10.8,3.2 V8.2 H6.8 Z"/><path fill="#3c3f41" stroke="#3c3f41" stroke-width="2.4" d="M10,6.4 L19,11.5 L10,16.6 Z"/><path fill="#499c54" d="M10,6.4 L19,11.5 L10,16.6 Z"/></svg>
<svg style="position:absolute;left:1739px;top:46px;" width="19.2" height="17.8" viewBox="0 0 19.2 17.8"><circle cx="7.4" cy="7.4" r="6.4" fill="none" stroke="#afb1b3" stroke-width="1.8"/><path fill="none" stroke="#afb1b3" stroke-width="1.6" d="M7.6,3.4 V7.6 L5.4,9.6"/><path fill="#3c3f41" stroke="#3c3f41" stroke-width="2.6" d="M9.8,7.2 L18.8,12.3 L9.8,17.4 Z"/><path fill="#499c54" d="M9.8,7.2 L18.8,12.3 L9.8,17.4 Z"/></svg>
<svg style="position:absolute;left:1766.5px;top:53px;" width="9.4" height="4.9" viewBox="0 0 9.4 4.9"><path fill="#afb1b3" d="M0,0 H9.4 L4.7,4.9 Z"/></svg>
<div style="position:absolute;left:1790px;top:48px;width:12.2px;height:12px;background:#5a5b5d;"></div>
<div style="position:absolute;left:1816px;top:41.7px;width:1px;height:24px;background:#555759;"></div>
<svg style="position:absolute;left:1829px;top:45.5px;" width="18.5" height="18.5" viewBox="0 0 18.5 18.5"><circle cx="7.1" cy="7.1" r="5.6" fill="none" stroke="#afb1b3" stroke-width="2.8"/><path d="M11.2,11.2 L17.2,17.2" stroke="#afb1b3" stroke-width="3"/></svg>
<div style="position:absolute;left:1859.8px;top:44px;width:20.3px;height:20px;border-radius:10.2px;background:#f3a433"></div>
<svg style="position:absolute;left:1865.5px;top:49px;" width="9.4" height="10" viewBox="0 0 9.4 10"><path fill="#fff" d="M4.7,0 L9.4,4.9 H6 V10 H3.4 V4.9 H0 Z"/></svg>
<svg style="position:absolute;left:1893.9px;top:45.2px;" width="18.4" height="18.4" viewBox="0 0 18.4 18.4"><defs><linearGradient id="cw1" x1="0" y1="0" x2="0" y2="1"><stop offset="0" stop-color="#9be15d"/><stop offset="0.5" stop-color="#3ccf8e"/><stop offset="1" stop-color="#21c2e0"/></linearGradient></defs><path fill="url(#cw1)" d="M3.4,0.3 C5,0.3 17.6,6.6 18.2,9 C18.4,10.6 6,18.2 3.6,18.2 C1,18.2 0.2,14 0.2,9.2 C0.2,4.4 1,0.3 3.4,0.3 Z"/><path fill="#1f8fd6" d="M9,3.2 C13,5.2 17.8,7.8 18.2,9 C18.3,10 14,13.2 9.6,15.6 L12.6,9 Z"/><path fill="#2359b8" d="M12.6,9 L18.2,9 C18.3,10 14,13.2 9.6,15.6 Z"/></svg>
<div class="t" style="font:400 16px/1.3 'Liberation Sans', 'Noto Sans CJK SC', sans-serif;color:#bbbbbb;letter-spacing:-0.461px;left:43.50px;top:9.00px;"><u>F</u>ile</div>
<div class="t" style="font:400 16px/1.3 'Liberation Sans', 'Noto Sans CJK SC', sans-serif;color:#bbbbbb;letter-spacing:0.125px;left:84.00px;top:9.00px;"><u>E</u>dit</div>
<div class="t" style="font:400 16px/1.3 'Liberation Sans', 'Noto Sans CJK SC', sans-serif;color:#bbbbbb;letter-spacing:-0.029px;left:129.00px;top:9.00px;"><u>V</u>iew</div>
<div class="t" style="font:400 16px/1.3 'Liberation Sans', 'Noto Sans CJK SC', sans-serif;color:#bbbbbb;letter-spacing:0.25px;left:179.50px;top:9.00px;"><u>N</u>avigate</div>
<div class="t" style="font:400 16px/1.3 'Liberation Sans', 'Noto Sans CJK SC', sans-serif;color:#bbbbbb;letter-spacing:0.049px;left:261.00px;top:9.00px;"><u>C</u>ode</div>
<div class="t" style="font:400 16px/1.3 'Liberation Sans', 'Noto Sans CJK SC', sans-serif;color:#bbbbbb;letter-spacing:0.123px;left:314.50px;top:9.00px;"><u>R</u>efactor</div>
<div class="t" style="font:400 16px/1.3 'Liberation Sans', 'Noto Sans CJK SC', sans-serif;color:#bbbbbb;letter-spacing:-0.477px;left:394.00px;top:9.00px;">R<u>u</u>n</div>
<div class="t" style="font:400 16px/1.3 'Liberation Sans', 'Noto Sans CJK SC', sans-serif;color:#bbbbbb;letter-spacing:0.537px;left:437.50px;top:9.00px;"><u>T</u>ools</div>
<div class="t" style="font:400 16px/1.3 'Liberation Sans', 'Noto Sans CJK SC', sans-serif;color:#bbbbbb;left:494.50px;top:9.00px;transform-origin:0 0;transform:scaleX(0.8533);">VC<u>S</u></div>
<div class="t" style="font:400 16px/1.3 'Liberation Sans', 'Noto Sans CJK SC', sans-serif;color:#bbbbbb;letter-spacing:0.43px;left:538.00px;top:9.00px;"><u>W</u>indow</div>
<div class="t" style="font:400 16px/1.3 'Liberation Sans', 'Noto Sans CJK SC', sans-serif;color:#bbbbbb;letter-spacing:0.664px;left:613.50px;top:9.00px;"><u>H</u>elp</div>
<div class="t" style="font:400 16px/1.3 'Liberation Sans', 'Noto Sans CJK SC', sans-serif;color:#8b8d8f;letter-spacing:0.398px;left:682.75px;top:8.50px;">python - jp.py - Administrator</div>
<div class="t" style="font:700 16px/1.3 'Liberation Sans', 'Noto Sans CJK SC', sans-serif;color:#bbbbbb;letter-spacing:0.511px;left:14.30px;top:44.20px;">python</div>
<div class="t" style="font:400 16px/1.3 'Liberation Sans', 'Noto Sans CJK SC', sans-serif;color:#bbbbbb;left:91.80px;top:44.20px;">1</div>
<div class="t" style="font:400 16px/1.3 'Liberation Sans', 'Noto Sans CJK SC', sans-serif;color:#bbbbbb;letter-spacing:0.401px;left:140.30px;top:44.20px;">jp.py</div>
<div class="t" style="font:400 16px/1.3 'Liberation Sans', 'Noto Sans CJK SC', sans-serif;color:#bbbbbb;left:1574.50px;top:45.30px;transform-origin:0 0;transform:scaleX(1.0993);">jp</div>
<div style="position:absolute;left:27px;top:72px;width:38px;height:33px;overflow:hidden"><div class="t" style="font:400 16px/1.3 'Liberation Sans', 'Noto Sans CJK SC', sans-serif;color:#bbbbbb;letter-spacing:0.852px;left:8.50px;top:8.00px;">Stru</div></div>
<div class="t" style="font:400 15.5px/1.3 'Liberation Sans', 'Noto Sans CJK SC', sans-serif;color:#bbbbbb;letter-spacing:-0.533px;left:99.80px;top:80.00px;">鼠标控制器详解</div>
<div class="t" style="font:400 16px/1.3 'Liberation Sans', 'Noto Sans CJK SC', sans-serif;color:#bbbbbb;letter-spacing:0.053px;left:205.25px;top:80.00px;">.py</div>
<div class="t" style="font:400 16px/1.3 'Liberation Sans', 'Noto Sans CJK SC', sans-serif;color:#bbbbbb;letter-spacing:0.245px;left:290.00px;top:80.00px;">zhuomian\1.py</div>
<div class="t" style="font:400 15.5px/1.3 'Liberation Sans', 'Noto Sans CJK SC', sans-serif;color:#bbbbbb;letter-spacing:-0.482px;left:459.30px;top:80.00px;">实名认证身份证核验(未编译）</div>
<div class="t" style="font:400 16px/1.3 'Liberation Sans', 'Noto Sans CJK SC', sans-serif;color:#bbbbbb;letter-spacing:0.176px;left:661.30px;top:80.00px;">\password.py</div>
<div class="t" style="font:400 16px/1.3 'Liberation Sans', 'Noto Sans CJK SC', sans-serif;color:#bbbbbb;letter-spacing:0.426px;left:821.50px;top:80.00px;">jp.py</div>
<div class="t" style="font:400 15.5px/1.3 'Liberation Sans', 'Noto Sans CJK SC', sans-serif;color:#bbbbbb;letter-spacing:-0.9px;left:920.00px;top:80.00px;">爬虫</div>
<div class="t" style="font:400 16px/1.3 'Liberation Sans', 'Noto Sans CJK SC', sans-serif;color:#bbbbbb;letter-spacing:0.703px;left:949.30px;top:80.00px;">\1.py</div>
<div class="t" style="font:400 16px/1.3 'Liberation Sans', 'Noto Sans CJK SC', sans-serif;color:#bbbbbb;letter-spacing:0.053px;left:1050.60px;top:80.00px;">2.py</div>
<div class="t" style="font:400 15.5px/1.3 'Liberation Sans', 'Noto Sans CJK SC', sans-serif;color:#bbbbbb;letter-spacing:-0.683px;left:1144.50px;top:80.00px;">密码本生成软件</div>
<div class="t" style="font:400 16px/1.3 'Liberation Sans', 'Noto Sans CJK SC', sans-serif;color:#bbbbbb;letter-spacing:0.285px;left:1249.20px;top:80.00px;">\password.py</div>
<div class="t" style="font:400 15.5px/1.3 'Liberation Sans', 'Noto Sans CJK SC', sans-serif;color:#bbbbbb;letter-spacing:-0.12px;left:1779.50px;top:113.50px;">28</div>
<div class="t" style="font:400 15.5px/1.3 'Liberation Sans', 'Noto Sans CJK SC', sans-serif;color:#bbbbbb;left:1827.90px;top:113.50px;">1</div>
<div class="t" style="font:400 15.5px/1.3 'Liberation Sans', 'Noto Sans CJK SC', sans-serif;color:#bbbbbb;letter-spacing:0.411px;left:150.50px;top:197.50px;">for x in range(int(inpu))</div>
<div class="t" style="font:400 16px/1.3 'Liberation Sans', 'Noto Sans CJK SC', sans-serif;color:#bbbbbb;letter-spacing:0.049px;left:34.50px;top:230.00px;">Run:</div>
<div class="t" style="font:400 16px/1.3 'Liberation Sans', 'Noto Sans CJK SC', sans-serif;color:#bbbbbb;letter-spacing:0.275px;left:116.00px;top:230.00px;">password</div>
<div class="t" style="font:400 16px/1.3 'Liberation Sans', 'Noto Sans CJK SC', sans-serif;color:#bbbbbb;letter-spacing:0.195px;left:259.75px;top:230.00px;">jp</div>
<div class="t" style="font:400 14px/1.3 'Liberation Sans', 'Noto Sans CJK SC', sans-serif;color:#ffffff;letter-spacing:-0.298px;left:58.40px;top:974.40px;">Run</div>
<div class="t" style="font:400 14px/1.3 'Liberation Sans', 'Noto Sans CJK SC', sans-serif;color:#bbbbbb;letter-spacing:0.02px;left:127.75px;top:974.40px;">Debug</div>
<div class="t" style="font:400 14px/1.3 'Liberation Sans', 'Noto Sans CJK SC', sans-serif;color:#bbbbbb;letter-spacing:-0.716px;left:215.60px;top:974.40px;">TODO</div>
<div class="t" style="font:400 14px/1.3 'Liberation Sans', 'Noto Sans CJK SC', sans-serif;color:#bbbbbb;letter-spacing:-0.262px;left:299.40px;top:974.40px;">Problems</div>
<div class="t" style="font:400 14px/1.3 'Liberation Sans', 'Noto Sans CJK SC', sans-serif;color:#bbbbbb;letter-spacing:-0.156px;left:405.00px;top:974.40px;">Terminal</div>
<div class="t" style="font:400 14px/1.3 'Liberation Sans', 'Noto Sans CJK SC', sans-serif;color:#bbbbbb;letter-spacing:-0.276px;left:505.70px;top:974.40px;">Python Packages</div>
<div class="t" style="font:400 14px/1.3 'Liberation Sans', 'Noto Sans CJK SC', sans-serif;color:#bbbbbb;letter-spacing:-0.127px;left:663.40px;top:974.40px;">Python Console</div>
<div class="t" style="font:400 14px/1.3 'Liberation Sans', 'Noto Sans CJK SC', sans-serif;color:#bbbbbb;letter-spacing:-0.158px;left:1819.40px;top:974.40px;">Event Log</div>
<div class="t" style="font:700 11.5px/1.3 'Liberation Sans', 'Noto Sans CJK SC', sans-serif;color:#ffffff;left:1804.40px;top:976.00px;">2</div>
<div class="t" style="font:400 16px/1.3 'Liberation Sans', 'Noto Sans CJK SC', sans-serif;color:#bbbbbb;letter-spacing:0.24px;left:34.40px;top:997.70px;">Connection to Python debugger failed: Interrupted function call: accept failed (yesterday 22:21)</div>
<div class="t" style="font:400 16px/1.3 'Liberation Sans', 'Noto Sans CJK SC', sans-serif;color:#bbbbbb;letter-spacing:-0.113px;left:1549.20px;top:997.70px;">114:1</div>
<div class="t" style="font:400 16px/1.3 'Liberation Sans', 'Noto Sans CJK SC', sans-serif;color:#bbbbbb;left:1604.40px;top:997.70px;transform-origin:0 0;transform:scaleX(0.8427);">CRLF</div>
<div class="t" style="font:400 16px/1.3 'Liberation Sans', 'Noto Sans CJK SC', sans-serif;color:#787878;letter-spacing:-0.582px;left:1654.40px;top:997.70px;">UTF-8</div>
<div class="t" style="font:400 16px/1.3 'Liberation Sans', 'Noto Sans CJK SC', sans-serif;color:#bbbbbb;letter-spacing:-0.306px;left:1712.70px;top:997.70px;">4 spaces</div>
<div class="t" style="font:400 16px/1.3 'Liberation Sans', 'Noto Sans CJK SC', sans-serif;color:#bbbbbb;letter-spacing:0.03px;left:1789.40px;top:997.70px;">Python 3.10</div>
<div class="t" style="font:400 14px/1.3 'Liberation Sans', 'Noto Sans CJK SC', sans-serif;color:#bbbbbb;letter-spacing:0.12px;left:19.50px;top:110.20px;transform-origin:1.00px 14.00px;transform:rotate(-90deg);">Project</div>
<div class="t" style="font:400 14px/1.3 'Liberation Sans', 'Noto Sans CJK SC', sans-serif;color:#bbbbbb;letter-spacing:-0.38px;left:19.50px;top:190.20px;transform-origin:1.00px 14.00px;transform:rotate(-90deg);">Learn</div>
<div class="t" style="font:400 14px/1.3 'Liberation Sans', 'Noto Sans CJK SC', sans-serif;color:#e8e8e8;letter-spacing:-0.089px;left:20.50px;top:814.00px;transform-origin:0.00px 14.00px;transform:rotate(-90deg);">Structure</div>
<div class="t" style="font:400 14px/1.3 'Liberation Sans', 'Noto Sans CJK SC', sans-serif;color:#a0a2a4;letter-spacing:-0.409px;left:19.50px;top:915.70px;transform-origin:1.00px 14.00px;transform:rotate(-90deg);">Favorites</div>
<div class="t" style="font:400 14px/1.3 'Liberation Sans', 'Noto Sans CJK SC', sans-serif;color:#b0b2b4;letter-spacing:-0.572px;left:1899.50px;top:92.00px;transform-origin:0.00px 14.00px;transform:rotate(90deg);">SciView</div>
<div class="t" style="font:400 14px/1.3 'Liberation Sans', 'Noto Sans CJK SC', sans-serif;color:#b0b2b4;letter-spacing:-0.306px;left:1898.50px;top:186.00px;transform-origin:1.00px 14.00px;transform:rotate(90deg);">Database</div>
<div class="t" style="font:300 21px/1.3 'Noto Sans CJK SC', 'Liberation Sans', sans-serif;color:rgba(255,255,255,0.86);letter-spacing:-0.835px;left:1776.80px;top:985.00px;">CSDN</div>
<div class="t" style="font:300 19.5px/1.3 'Noto Sans CJK SC', 'Liberation Sans', sans-serif;color:rgba(255,255,255,0.86);left:1833.35px;top:987.50px;">@</div>
<div class="t" style="font:300 21px/1.3 'Noto Sans CJK SC', 'Liberation Sans', sans-serif;color:rgba(255,255,255,0.86);left:1850.50px;top:987.30px;transform-origin:0 0;transform:scaleX(0.8833);">小木</div>
<div class="t" style="font:300 20px/1.3 'Noto Sans CJK SC', 'Liberation Sans', sans-serif;color:rgba(255,255,255,0.86);left:1889.62px;top:987.00px;">_</div>
<svg style="position:absolute;left:90px;top:246px" width="250" height="730" viewBox="90 246 250 730"><path fill="#ed1c24" fill-rule="evenodd" d="M99.3,251.2 H327 Q332,251.2 332,256.2 V965.2 Q332,970.2 327,970.2 H99.3 Q94.3,970.2 94.3,965.2 V256.2 Q94.3,251.2 99.3,251.2 Z M103.3,259 H321.7 Q322.7,259 322.7,260 V960.6 Q322.7,961.6 321.7,961.6 H103.3 Q102.3,961.6 102.3,960.6 V260 Q102.3,259 103.3,259 Z"/></svg>

</div>
</body></html>
